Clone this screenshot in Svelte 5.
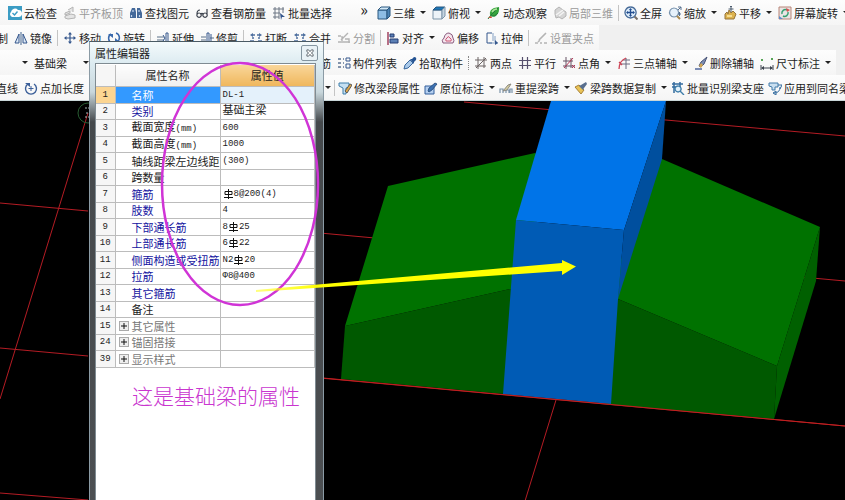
<script lang="ts">
  type Shape = { d: string; fill?: string; stroke?: string; w?: number };
  type Tool = {
    label?: string;
    icon?: string;
    arrow?: boolean;
    off?: boolean;
    kind?: 'sep' | 'grip' | 'cut';
  };
  type Row = {
    id: string;
    name: string;
    unit?: string;
    value?: string;
    bar?: [string, string];
    chinese?: boolean;
    tone?: 'blue' | 'grey';
    group?: boolean;
  };

  const navy = '#34568c';
  const grey = '#b4b4b4';

  const icons: Record<string, Shape[]> = {
    cloud: [
      { d: 'M0 0h14v14H0z', fill: '#3b9cc4' },
      { d: 'M4 11a3 3 0 0 1-1-5a4 4 0 0 1 7-2a3.500 3.500 0 0 1 1 7z', fill: '#fff' },
      { d: 'M4.500 7l2 2l3-3.500', stroke: '#3b9cc4', w: 1.4 },
    ],
    slab: [
      { d: 'M2 10l6-2l4 1v3l-7 1l-3-1zM2 7l5-2v2l-5 2zM5 4l5-3v5', fill: '#e4e4e4', stroke: grey },
    ],
    find: [
      { d: 'M3 2h3l1 4v6H1V7zM8 2h3l2 5v5H8V6z', fill: '#44699a' },
      { d: 'M2.500 9v2M10.500 9v2M4 4v2M10 4v2', stroke: '#c6d8ee', w: 1.2 },
    ],
    glasses: [
      { d: 'M4 7a2.200 2.200 0 1 0 .1 0M10 7a2.200 2.200 0 1 0 .1 0M6 8q1-1 2 0M2 8q0-4 3-4M12 8V3', stroke: '#3b414c', w: 1.2 },
    ],
    batch: [
      { d: 'M1 3h11M1 7h7M1 11h6M3 1v12M7 1v12M11 1v6', stroke: '#6c7684' },
      { d: 'M8 7l5 4l-3 0l-1 3z', fill: '#34568c' },
    ],
    cube: [
      { d: 'M1 4h9v9H1z', fill: '#8dbde4', stroke: '#29567e' },
      { d: 'M1 4l3-3h9l-3 3z', fill: '#d3e9f8', stroke: '#29567e' },
      { d: 'M10 4l3-3v9l-3 3z', fill: '#4b83b4', stroke: '#29567e' },
    ],
    top: [
      { d: 'M1 4h9v9H1z', fill: '#edf3f8', stroke: '#7d95a9' },
      { d: 'M1 4l3-3h9l-3 3z', fill: '#1c77b8', stroke: '#29567e' },
      { d: 'M10 4l3-3v9l-3 3z', fill: '#c5d4e0', stroke: '#7d95a9' },
    ],
    orbit: [
      { d: 'M3 9Q2 4 7 2l5-1q1 5-3 9q-3 2-6-1', fill: '#36a43c' },
      { d: 'M1 13l3-4l7-7M4 10q4 1 7-3', stroke: '#237a3a' },
      { d: 'M5 6q2-3 5-3', stroke: '#aee59b', w: 1.5 },
      { d: 'M1 12l3-2l1 2z', fill: '#d34d32' },
    ],
    local: [
      { d: 'M2 8V4l4-3l4 3l3 2v4l-4 3l-3-2l-3 1z', fill: '#d5d5d5', stroke: grey },
      { d: 'M3 9l7-5M6 10l5-4', stroke: '#f4f4f4', w: 1.5 },
    ],
    full: [
      { d: 'M6.500 1a5.500 5.500 0 1 0 .1 0', fill: '#dcebf9', stroke: '#476b98', w: 1.3 },
      { d: 'M10.500 10.500l3 3', stroke: '#77706a', w: 2 },
      { d: 'M6.500 3v7M3 6.500h7', stroke: '#234e91', w: 1.3 },
      { d: 'M5 4l1.500-2L8 4M5 9l1.500 2L8 9M4 5L2 6.500L4 8M9 5l2 1.500L9 8', fill: '#234e91' },
    ],
    zoom: [
      { d: 'M6 2a4.500 4.500 0 1 0 .1 0', fill: '#e6f1fa', stroke: '#7792ad', w: 1.2 },
      { d: 'M9 10l3 3', stroke: '#a98a50', w: 2 },
      { d: 'M10 1h3v3M13 1l-3 3M10 8h3M11.500 6v4', stroke: '#56708f' },
    ],
    pan: [
      { d: 'M2 13V8l2-2l1 2l1-4l2 3l2-2l3 3l-2 5z', fill: '#ddb34f', stroke: '#96743a' },
      { d: 'M8 0v6M5.500 3h5M7 1l1-1l1 1', stroke: '#4c5c6f' },
      { d: 'M4 10h5', stroke: '#f6dd91', w: 2 },
    ],
    screen: [
      { d: 'M1 1h12v12H1z', fill: '#e9e5e4', stroke: '#b88477' },
      { d: 'M4 8a3.500 3.500 0 0 1 5-4M10 6a3.500 3.500 0 0 1-5 4', stroke: '#35a072', w: 1.5 },
      { d: 'M8 2l4 2l-3 2z', fill: '#d74e4e' },
      { d: 'M1 10l4 3H1z', fill: '#5d8dca' },
    ],
    mirror: [
      { d: 'M1 12L5 3v9zM13 12L9 3v9z', stroke: navy, fill: '#dce8f5' },
      { d: 'M7 1v13', stroke: '#42658d' },
    ],
    move: [
      { d: 'M7 2v10M2 7h10', stroke: navy, w: 1.2 },
      { d: 'M5 3.500L7 1l2 2.500zM5 10.500L7 13l2-2.500zM3.500 5L1 7l2.500 2zM10.500 5L13 7l-2.500 2z', fill: navy },
    ],
    rotate: [
      { d: 'M4 3a5 5 0 0 0 1 9M9 2a5 5 0 0 1 1 9', stroke: '#3969ac', w: 1.5 },
      { d: 'M1 3h5v4zM13 11H8V7z', fill: '#3969ac' },
    ],
    extend: [
      { d: 'M1 6h7M1 9h7', stroke: '#5a7189' },
      { d: 'M10 2h2v11h-2zM7 4l2 3l-2 3', stroke: navy },
    ],
    trim: [
      { d: 'M1 6h5M1 9h5M10 7h4', stroke: '#5a7189' },
      { d: 'M7 2h2v11H7zM11 3v9', stroke: navy },
    ],
    split: [
      { d: 'M1 10h4M9 10h4M3 4h3M8 4h3M3 7h2M9 7h2', stroke: '#4d6f9f', w: 1.5 },
      { d: 'M4 2L1 4l3 2zM10 2l3 2l-3 2z', fill: '#4d6f9f' },
    ],
    divide: [
      { d: 'M1 11h12M4 9l7-7M1 5h3M8 8h4v4M5 5v5', stroke: grey, w: 1.4 },
    ],
    align: [
      { d: 'M2 1v13', stroke: '#9b3655', w: 1.4 },
      { d: 'M4 3h4v3H4zM4 8h8v4H4z', fill: '#5b7fb4', stroke: '#243c73' },
    ],
    offset: [
      { d: 'M2 12Q0 9 3 7q1-5 5-5q4 1 4 5q2 3 0 5z', stroke: '#8b5c7f', fill: '#f4e5ed' },
      { d: 'M5 10q-1-2 1-3q1-3 3 0q2 1 1 3z', stroke: '#cc5573' },
    ],
    stretch: [
      { d: 'M2 2h5M2 2v10h5', stroke: '#34568c' },
      { d: 'M8 2v8M10 5v6M4 12h9', stroke: '#688ab6', w: 0.8 },
      { d: 'M10 9l3 3l-3 2z', fill: '#34568c' },
    ],
    grip: [
      { d: 'M1 12h3M6 12h2M10 12h3M5 9l7-7M4 11l2-2', stroke: grey, w: 1.6 },
    ],
    list: [
      { d: 'M1 3h3M1 7h3M1 11h3M6 3h1M6 7h1M6 11h1', stroke: '#5c7392', w: 1.5 },
      { d: 'M9 2h4v3H9zM9 8h4v4H9z', stroke: '#34568c' },
    ],
    pick: [
      { d: 'M1 13l1-4l5-5l3 3l-5 5z', fill: '#a9c9ea', stroke: '#38679e' },
      { d: 'M7 3l2 0l2-2q3 0 2 3l-2 2v2z', fill: '#255493' },
    ],
    two: [
      { d: 'M1 4h12M1 10h11M4 1v12M10 1v11M2 12L12 2', stroke: '#6c6464' },
    ],
    parallel: [
      { d: 'M1 4.500h12M1 9.500h12M4.500 1v12M9.500 1v12', stroke: '#57516e', w: 1.2 },
    ],
    angle: [
      { d: 'M1 5h10M1 10h12M4 1v12M9 2v10', stroke: '#685466' },
      { d: 'M2 12L11 2M10 9l3 3M13 9l-3 3', stroke: '#b53657' },
    ],
    three: [
      { d: 'M6 4h7M3 8h10M9 2v11', stroke: '#6c6b80' },
      { d: 'M2 13Q2 5 9 2M2 6l3 3', stroke: '#cd4455', w: 1.3 },
    ],
    erase: [
      { d: 'M1 13h7', stroke: '#455d99', w: 1.4 },
      { d: 'M5 10l2-4l6-5l-3 7l-3 3z', fill: '#7d8eb4', stroke: '#465275' },
      { d: 'M5 10l2-3l2 2l-2 3z', fill: '#d1a653' },
    ],
    measure: [
      { d: 'M1 9v5M13 9v5M2 12h10', stroke: '#3c434e' },
      { d: 'M4 10l-3 2l3 2zM10 10l3 2l-3 2z', fill: '#3c434e' },
      { d: 'M1 4h2M11 3h2', stroke: '#57a457', w: 2 },
    ],
    length: [
      { d: 'M4 3a5.500 5.500 0 1 0 6 0', stroke: '#3b5f99', w: 1.4 },
      { d: 'M1 2h5v4z', fill: '#3b5f99' },
      { d: 'M7 5v5M4.500 7.500h5', stroke: '#3b5f99' },
    ],
    modify: [
      { d: 'M1 2h10v4l-3 1v6H5V7L1 5z', fill: '#c6e0f2', stroke: '#3f7eaa' },
      { d: 'M7 10l5-7l2 1l-5 8z', fill: '#dda647', stroke: '#5d5b59' },
    ],
    note: [
      { d: 'M1 5h9v8H1z', fill: '#b4cff0', stroke: '#335f9b' },
      { d: 'M4 10l1-3l6-5l2 1l-5 6l-3 2z', fill: '#3d72b2', stroke: '#244775', w: 0.8 },
    ],
    span: [
      { d: 'M1 12V8h3v4M7 12V9h3v3M11 12V8h2v4', stroke: '#7b93aa', w: 1.2 },
      { d: 'M4 10l5-6l3-1l-4 6z', fill: '#d8d0a1', stroke: '#8d8a82' },
    ],
    brush: [
      { d: 'M1 6l4-2l5 5l-3 4z', fill: '#e9c357', stroke: '#a88237' },
      { d: 'M5 5l2-1l5-3l1 2l-3 4l-1 2z', fill: '#596f8e' },
    ],
    detect: [
      { d: 'M1 3h11M3 1v11M1 6h4M9 1v5', stroke: '#356c9f', w: 1.5 },
      { d: 'M7 5a3 3 0 1 0 .1 0M9 10l4 4', stroke: '#3f7eaa', w: 1.4, fill: '#e1f0fa' },
    ],
    apply: [
      { d: 'M1 2h9v4H7v3H4V6L1 5z', fill: '#c9dff0', stroke: '#417ba9' },
      { d: 'M6 12q6 0 6-6M10 4h4l-2 4M8 10v4l-3-2z', stroke: '#356c9f' },
    ],
  };

  const sep: Tool = { kind: 'sep' };

  const viewLeft: Tool[] = [
    { label: '云检查', icon: 'cloud' },
    { label: '平齐板顶', icon: 'slab', off: true },
    { label: '查找图元', icon: 'find' },
    { label: '查看钢筋量', icon: 'glasses' },
    { label: '批量选择', icon: 'batch' },
  ];
  const viewRight: Tool[] = [
    { label: '三维', icon: 'cube', arrow: true },
    { label: '俯视', icon: 'top', arrow: true },
    { label: '动态观察', icon: 'orbit' },
    { label: '局部三维', icon: 'local', off: true },
    sep,
    { label: '全屏', icon: 'full' },
    { label: '缩放', icon: 'zoom', arrow: true },
    { label: '平移', icon: 'pan', arrow: true },
    { label: '屏幕旋转', icon: 'screen', arrow: true },
  ];
  const editTools: Tool[] = [
    { label: '制', kind: 'cut' },
    { label: '镜像', icon: 'mirror' },
    sep,
    { label: '移动', icon: 'move' },
    { label: '旋转', icon: 'rotate' },
    sep,
    { label: '延伸', icon: 'extend' },
    { label: '修剪', icon: 'trim' },
    sep,
    { label: '打断', icon: 'split' },
    { label: '合并', icon: 'split' },
    { label: '分割', icon: 'divide', off: true },
    sep,
    { label: '对齐', icon: 'align', arrow: true },
    { label: '偏移', icon: 'offset' },
    { label: '拉伸', icon: 'stretch' },
    sep,
    { label: '设置夹点', icon: 'grip', off: true },
  ];
  const axisTools: Tool[] = [
    { label: '筋' },
    { label: '构件列表', icon: 'list' },
    { label: '拾取构件', icon: 'pick' },
    { kind: 'grip' },
    { label: '两点', icon: 'two' },
    { label: '平行', icon: 'parallel' },
    { label: '点角', icon: 'angle', arrow: true },
    { label: '三点辅轴', icon: 'three', arrow: true },
    { label: '删除辅轴', icon: 'erase' },
    { label: '尺寸标注', icon: 'measure', arrow: true },
  ];
  const drawTools: Tool[] = [
    { label: '直线', kind: 'cut' },
    { label: '点加长度', icon: 'length' },
  ];
  const beamTools: Tool[] = [
    { arrow: true },
    sep,
    { label: '修改梁段属性', icon: 'modify' },
    { label: '原位标注', icon: 'note', arrow: true },
    { label: '重提梁跨', icon: 'span', arrow: true },
    { label: '梁跨数据复制', icon: 'brush', arrow: true },
    { label: '批量识别梁支座', icon: 'detect' },
    { label: '应用到同名梁', icon: 'apply' },
  ];

  const rows: Row[] = [
    { id: '1', name: '名称', value: 'DL-1' },
    { id: '2', name: '类别', value: '基础主梁', chinese: true, tone: 'blue' },
    { id: '3', name: '截面宽度', unit: '(mm)', value: '600' },
    { id: '4', name: '截面高度', unit: '(mm)', value: '1000' },
    { id: '5', name: '轴线距梁左边线距', value: '(300)' },
    { id: '6', name: '跨数量' },
    { id: '7', name: '箍筋', bar: ['', '8@200(4)'], tone: 'blue' },
    { id: '8', name: '肢数', value: '4', tone: 'blue' },
    { id: '9', name: '下部通长筋', bar: ['8', '25'], tone: 'blue' },
    { id: '10', name: '上部通长筋', bar: ['6', '22'], tone: 'blue' },
    { id: '11', name: '侧面构造或受扭筋', bar: ['N2', '20'], tone: 'blue' },
    { id: '12', name: '拉筋', value: 'Φ8@400', tone: 'blue' },
    { id: '13', name: '其它箍筋', tone: 'blue' },
    { id: '14', name: '备注' },
    { id: '15', name: '其它属性', tone: 'grey', group: true },
    { id: '24', name: '锚固搭接', tone: 'grey', group: true },
    { id: '39', name: '显示样式', tone: 'grey', group: true },
  ];

  let selected = $state('1');
</script>

{#snippet tools(items: Tool[])}
  {#each items as tool}
    {#if tool.kind === 'sep'}
      <span class="sep"></span>
    {:else if tool.kind === 'grip'}
      <span class="grip"></span>
    {:else}
      <button
        type="button"
        class="tool"
        class:cut={tool.kind === 'cut'}
        disabled={tool.off}
        aria-label={tool.label ?? '更多'}
      >
        {#if tool.icon}
          <svg class="icon" viewBox="0 0 14 14" aria-hidden="true">
            {#each icons[tool.icon] as s}
              <path d={s.d} fill={s.fill ?? 'none'} stroke={s.stroke ?? 'none'} stroke-width={s.w ?? 1} />
            {/each}
          </svg>
        {/if}
        {#if tool.label}<span>{tool.label}</span>{/if}
        {#if tool.arrow}<i class="arrow"></i>{/if}
      </button>
    {/if}
  {/each}
{/snippet}

<div class="app">
  <header>
    <div class="bar">
      <div class="strip lead view">
        {@render tools(viewLeft)}
        <button type="button" class="more">»</button>
      </div>
      <div class="strip">{@render tools(viewRight)}</div>
    </div>
    <div class="bar edit">
      <div class="strip">{@render tools(editTools)}</div>
    </div>
    <div class="bar">
      <div class="strip lead combos">
        <label class="combo small">
          <select aria-label="楼层"><option></option></select>
          <i class="arrow"></i>
        </label>
        <label class="combo">
          <select aria-label="构件类型"><option>基础梁</option></select>
          <i class="arrow"></i>
        </label>
      </div>
      <div class="strip">{@render tools(axisTools)}</div>
    </div>
    <div class="bar">
      <div class="strip lead draw">{@render tools(drawTools)}</div>
      <div class="strip tight">{@render tools(beamTools)}</div>
    </div>
  </header>

  <main>
    <svg class="scene" aria-label="三维视图">
      <g transform="translate(0 -100)">
        <g class="axis">
          <path d="M88 112L0 398M0 202l88 8M0 347l88 8M0 492l88 7" />
          <path d="M464 101L845 135M320 232L845 280M320 377L845 425M556 399L525 500" />
        </g>
        <circle cx="88" cy="112" r="10" fill="none" stroke="#285c32" />
        <path d="M85 107h4M86 112h3M85 116h4" stroke="#a9b9b9" stroke-dasharray="2 1" />
        <path d="M388 185L535 152L545 160L525 290L510 288L345 325z" fill="#007200" />
        <path d="M345 325L510 288L525 290L520 394L504 393L341 378z" fill="#005900" />
        <path d="M650 158L662 158L820 226L777 365L618 298L612 290z" fill="#007200" />
        <path d="M610 296L618 298L777 365L774 418L605 403z" fill="#005900" />
        <path d="M820 226L816 280L774 418L777 365z" fill="#006000" />
        <path d="M551 100H666L624 229L516 219z" fill="#0074e8" />
        <path d="M666 100L662 158L618 298L624 229z" fill="#004f9e" />
        <path d="M516 219L624 229L618 298L611 403L503 393z" fill="#005bb5" />
        <path d="M323 377L845 425" stroke="#c02020" />
      </g>
    </svg>
  </main>

  <section class="dialog" aria-label="属性编辑器">
    <div class="title">
      <h1>属性编辑器</h1>
      <button type="button" class="close" aria-label="关闭">
        <svg viewBox="0 0 9 9" aria-hidden="true">
          <path d="M1 1h2l1.500 2L6 1h2v2L6 4.500L8 6v2H6L4.500 6L3 8H1V6l2-1.500L1 3z" fill="#fff" stroke="#555e66" />
        </svg>
      </button>
    </div>
    <div class="body">
      <table>
        <thead>
          <tr>
            <th class="num"></th>
            <th>属性名称</th>
            <th class="value">属性值</th>
          </tr>
        </thead>
        <tbody>
          {#each rows as row}
            <tr class:selected={row.id === selected} onclick={() => (selected = row.id)}>
              <td class="num">{row.id}</td>
              <td class="name {row.tone ?? ''}">
                <div class="cell">
                  <span class="toggle">
                    {#if row.group}
                      <button type="button" class="expand" aria-label="展开{row.name}">
                        <svg viewBox="0 0 8 8" aria-hidden="true"><path d="M1 4h6M4 1v6" stroke="#111" /></svg>
                      </button>
                    {/if}
                  </span>
                  <span>{row.name}{#if row.unit}<small>{row.unit}</small>{/if}</span>
                </div>
              </td>
              <td class="value" class:chinese={row.chinese}>
                {#if row.bar}
                  <span class="rebar">{row.bar[0]}<svg viewBox="0 0 11 10" aria-label="HRB400"><path d="M5.500 0v10M2 2.500h7v3H2zM1 8.500h9" fill="none" stroke="#111" /></svg>{row.bar[1]}</span>
                {:else}
                  {row.value ?? ''}
                {/if}
              </td>
            </tr>
          {/each}
        </tbody>
      </table>
      <p>这是基础梁的属性</p>
    </div>
  </section>

  <!-- hand-drawn marks above the dialog and the model -->
  <svg class="marks" aria-hidden="true">
    <defs>
      <linearGradient id="fade">
        <stop offset="0" stop-color="#ff0" stop-opacity="0.5" />
        <stop offset="0.2" stop-color="#ff0" />
      </linearGradient>
    </defs>
    <ellipse cx="240" cy="184" rx="78" ry="121" />
    <path d="M256 290L562 263V260L576 266.500L562 275V271L256 292z" fill="url(#fade)" />
  </svg>
</div>

<style>
  :global(body) {
    margin: 0;
  }

  .app {
    position: relative;
    display: flex;
    flex-direction: column;
    min-height: 100vh;
    overflow: hidden;
    background: #000;
    font-family: "Noto Sans CJK SC", sans-serif;
    font-size: 11px;
    line-height: 16px;
    color: #1c1c1c;
  }

  button,
  select {
    font: inherit;
    color: inherit;
    border: 0;
    padding: 0;
    background: none;
  }

  header {
    background: #f0f0f0;
    border-bottom: 1px solid #c9d6d8;
  }

  .bar {
    display: flex;
    height: 25px;
    overflow: hidden;
  }

  .strip {
    display: flex;
    align-items: center;
    gap: 6px;
    flex: none;
    box-sizing: border-box;
    padding: 0 5px;
    background: linear-gradient(#fdfdfd, #f5f5f5);
    white-space: nowrap;
  }

  .edit .strip {
    padding-left: 0;
  }

  .tight {
    gap: 4px;
  }

  .lead.view {
    width: 372px;
    padding-left: 8px;
    padding-right: 4px;
  }

  .lead.combos {
    width: 315px;
    padding-left: 0;
  }

  .lead.draw {
    width: 320px;
    padding-left: 0;
  }

  .tool {
    display: flex;
    align-items: center;
    gap: 2px;
    height: 20px;
    flex: none;
  }

  .tool:disabled {
    color: #9a9a9a;
  }

  .tool:hover:enabled {
    background: #e2eefa;
  }

  .cut {
    width: 8px;
    justify-content: flex-end;
  }

  .draw .cut {
    width: 18px;
  }

  .icon {
    display: block;
    width: 14px;
    height: 14px;
  }

  .arrow {
    width: 0;
    height: 0;
    border: 3px solid transparent;
    border-top-color: #222;
    border-bottom: 0;
  }

  .tool span + .arrow {
    margin-left: 3px;
  }

  .more {
    margin-left: auto;
    font-size: 16px;
    padding-bottom: 8px;
  }

  .sep {
    width: 1px;
    height: 16px;
    margin: 0 -1px;
    background: #c4c4c4;
  }

  .grip {
    width: 0;
    height: 14px;
    margin: 0 -1px;
    border-left: 1px dotted #888;
  }

  .combo {
    display: flex;
    align-items: center;
    width: 55px;
    height: 20px;
  }

  .combo.small {
    width: 28px;
  }

  .combo select {
    flex: 1;
    min-width: 0;
    appearance: none;
    outline: none;
  }

  main {
    position: relative;
    flex: 1;
    min-height: 399px;
  }

  .scene,
  .marks {
    position: absolute;
    inset: 0;
    width: 100%;
    height: 100%;
  }

  .axis {
    fill: none;
    stroke: #b41c24;
  }

  .marks {
    pointer-events: none;
  }

  .marks ellipse {
    fill: none;
    stroke: #d034d6;
    stroke-width: 2.5;
  }

  .dialog {
    position: absolute;
    top: 41px;
    bottom: 0;
    left: 89px;
    width: 235px;
    box-sizing: border-box;
    display: flex;
    flex-direction: column;
    padding: 0 5px;
    border: 1px solid #8b9ba5;
    border-top-color: #4a5a64;
    border-bottom: 0;
    background: linear-gradient(#f4fafc, #dcebf1 22px, #c9d7dc 50px, #45494c 80px, #4c4f52);
  }

  .title {
    display: flex;
    justify-content: space-between;
    align-items: center;
    height: 21px;
  }

  h1 {
    margin: 0;
    font-size: 11px;
    font-weight: 400;
  }

  .close {
    display: grid;
    place-items: center;
    width: 17px;
    height: 16px;
    box-sizing: border-box;
    border: 1px solid #8495a0;
    border-radius: 2px;
    background: #e9f2f6;
  }

  .close svg {
    width: 8px;
    height: 8px;
  }

  .body {
    flex: 1;
    border: 1px solid #7f8b92;
    border-bottom: 0;
    background: #fff;
    margin-right: 2px;
  }

  table {
    width: 100%;
    table-layout: fixed;
    border-collapse: collapse;
    margin-top: 1px;
  }

  th,
  td {
    box-sizing: border-box;
    padding: 0;
    border-right: 1px solid #bcbcbc;
    border-bottom: 1px solid #bcbcbc;
    height: 16px;
    line-height: 14px;
    white-space: nowrap;
    font-weight: 400;
  }

  tbody tr:nth-child(odd) td {
    height: 17px;
  }

  th {
    height: 21px;
    background: linear-gradient(#fdfdfd, #f0f0f0);
  }

  th:nth-child(2) {
    width: 105px;
  }

  .num {
    width: 19px;
    background: #f6f6f6;
    text-align: center;
  }

  .num,
  td.value,
  small {
    font-family: "Liberation Mono", "Noto Sans CJK SC", monospace;
    font-size: 9px;
  }

  th.value {
    background: linear-gradient(#f9d69a, #efb75c);
  }

  td.value {
    padding-left: 2px;
  }

  td.chinese {
    font-size: 11px;
  }

  .cell {
    display: flex;
    align-items: center;
    height: 14px;
  }

  .toggle {
    flex: none;
    width: 13px;
    padding-left: 3px;
  }

  .expand {
    display: block;
    width: 10px;
    height: 10px;
    box-sizing: border-box;
    border: 1px solid #aaa;
    background: #eee;
  }

  .expand svg {
    display: block;
    width: 8px;
    height: 8px;
  }

  .blue {
    color: #1414a0;
  }

  .grey {
    color: #777;
  }

  .selected .num {
    background: #fcd592;
  }

  .selected .name {
    background: #3399ff;
    color: #fff;
  }

  .selected .value {
    background: #e4f1fb;
  }

  .rebar {
    display: flex;
    align-items: center;
  }

  .rebar svg {
    width: 11px;
    height: 10px;
  }

  p {
    margin: 12px 0 0 36px;
    font-size: 21px;
    line-height: 30px;
    font-weight: 300;
    color: #c936cf;
    white-space: nowrap;
  }
</style>
